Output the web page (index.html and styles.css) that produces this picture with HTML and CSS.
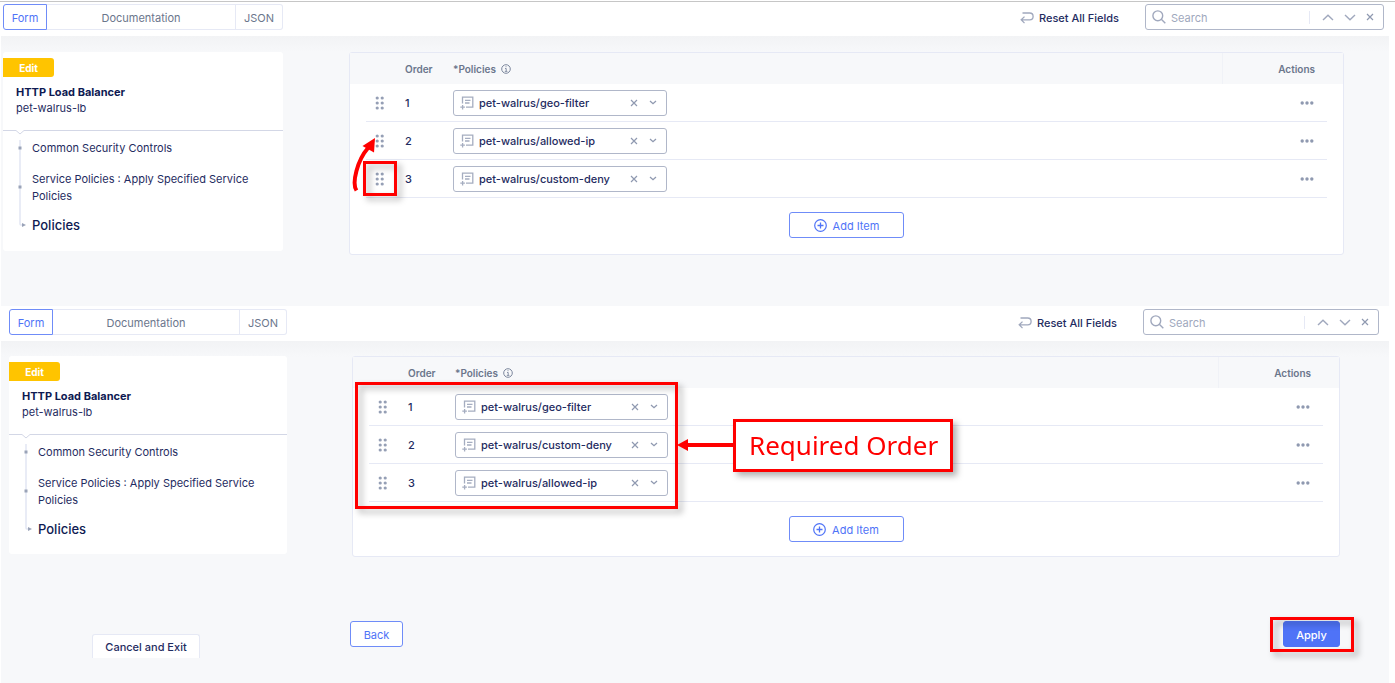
FILE: index.html
```html
<!DOCTYPE html>
<html lang="en">
<head>
<meta charset="utf-8">
<meta name="viewport" content="width=device-width, initial-scale=1">
<title>HTTP Load Balancer - Service Policies</title>
<link rel="stylesheet" href="styles.css">
</head>
<body>
<svg class="sprite" aria-hidden="true">
  <symbol id="i-grip" viewBox="0 0 10 14"><g fill="#959fb5"><circle cx="2.2" cy="2" r="1.6"/><circle cx="7.2" cy="2" r="1.6"/><circle cx="2.2" cy="7" r="1.6"/><circle cx="7.2" cy="7" r="1.6"/><circle cx="2.2" cy="12" r="1.6"/><circle cx="7.2" cy="12" r="1.6"/></g></symbol>
  <symbol id="i-note" viewBox="0 0 14 14"><path d="M2.500 7.500V1.200h10.300v10H6M5 4.300h5.500M5 7h4.500M.3 11.200h4.600M2.600 8.900v4.600" fill="none" stroke="#a5adc0" stroke-width="1.300"/></symbol>
  <symbol id="i-x" viewBox="0 0 8 8"><path d="M1 1l6 6M7 1L1 7" fill="none" stroke="#8f99b0" stroke-width="1.200"/></symbol>
  <symbol id="i-down" viewBox="0 0 8 5"><path d="M1 1l3 2.700L7 1" fill="none" stroke="#8f99b0" stroke-width="1.300"/></symbol>
  <symbol id="i-next" viewBox="0 0 12 7"><path d="M1 1l5 4.800L11 1" fill="none" stroke="#a0a8bd" stroke-width="1.400"/></symbol>
  <symbol id="i-prev" viewBox="0 0 12 7"><path d="M1 6l5-4.800L11 6" fill="none" stroke="#a0a8bd" stroke-width="1.400"/></symbol>
  <symbol id="i-search" viewBox="0 0 14 14"><circle cx="5.800" cy="5.800" r="4.900" fill="none" stroke="#a0a8bd" stroke-width="1.400"/><path d="M9.300 9.300l4 4" stroke="#a0a8bd" stroke-width="1.400"/></symbol>
  <symbol id="i-reset" viewBox="0 0 14 12"><path d="M2.500 1h7.200a3.400 3.400 0 0 1 0 6.800H1.500M4.500 4.600L1.200 7.800l3.300 3.300" fill="none" stroke="#a0a8bd" stroke-width="1.300"/></symbol>
  <symbol id="i-info" viewBox="0 0 10 10"><circle cx="5" cy="5" r="4.300" fill="none" stroke="#7c879d"/><path d="M4 4.500h1.200v2.800M3.800 7.400h2.600M4.500 2.700h1" fill="none" stroke="#7c879d" stroke-width=".9"/></symbol>
  <symbol id="i-plus" viewBox="0 0 13 13"><circle cx="6.500" cy="6.500" r="5.800" fill="none" stroke="#4f73f7" stroke-width="1.200"/><path d="M3.500 6.500h6M6.500 3.500v6" stroke="#4f73f7" stroke-width="1.300"/></symbol>
  <symbol id="i-dots" viewBox="0 0 14 4"><g fill="#8f99b0"><circle cx="2.200" cy="2" r="1.700"/><circle cx="7" cy="2" r="1.700"/><circle cx="11.800" cy="2" r="1.700"/></g></symbol>
  <symbol id="i-tree" viewBox="0 0 10 90"><path d="M4 0v84q0 1 1 1h2" fill="none" stroke="#e2e6f3" stroke-width="1.500"/><path d="M2.500 6.500h3v3h-3zM2.500 45.500h3v3h-3zM6 83l4 2-4 2z" fill="#9aa3b8"/></symbol>
</svg>

<section class="view">
  <header class="toolbar">
    <nav class="tabs" aria-label="View mode">
      <button class="tab tab-active">Form</button>
      <button class="tab">Documentation</button>
      <button class="tab">JSON</button>
    </nav>
    <button class="reset"><svg width="14" height="12"><use href="#i-reset"/></svg>Reset All Fields</button>
    <div class="search">
      <svg width="14" height="14"><use href="#i-search"/></svg>
      <input type="text" placeholder="Search" aria-label="Search fields">
      <div class="search-nav">
        <button aria-label="Previous match"><svg width="12" height="7"><use href="#i-prev"/></svg></button>
        <button aria-label="Next match"><svg width="12" height="7"><use href="#i-next"/></svg></button>
        <button aria-label="Clear search"><svg width="8" height="8"><use href="#i-x"/></svg></button>
      </div>
    </div>
  </header>
  <main class="content">
    <aside class="outline">
      <span class="badge">Edit</span>
      <div class="outline-head">
        <h2>HTTP Load Balancer</h2>
        <p>pet-walrus-lb</p>
        <svg class="notch" width="10" height="5" viewBox="0 0 10 5"><path d="M0 0h10L5 4z" fill="#fff"/><path d="M0 .5h1l4 3.500 4-3.500h1" fill="none" stroke="#d3d7e6"/></svg>
      </div>
      <nav class="tree" aria-label="Form sections">
        <svg width="10" height="90"><use href="#i-tree"/></svg>
        <div class="tree-links">
          <a href="#">Common Security Controls</a>
          <a href="#">Service Policies : Apply Specified Service Policies</a>
          <a class="current" href="#">Policies</a>
        </div>
      </nav>
    </aside>
    <section class="policies">
      <table>
        <thead><tr><th class="col-grip"></th><th class="col-order">Order</th><th><span class="label">*Policies <svg width="10" height="10"><use href="#i-info"/></svg></span></th><th class="col-actions">Actions</th></tr></thead>
        <tbody>
          <tr>
            <td><button class="grip" aria-label="Drag row 1"><svg width="10" height="14"><use href="#i-grip"/></svg></button></td><td>1</td>
            <td><div class="picker"><svg width="14" height="14"><use href="#i-note"/></svg><select aria-label="Policy 1"><option>pet-walrus/geo-filter</option></select><button aria-label="Clear policy 1"><svg width="8" height="8"><use href="#i-x"/></svg></button><svg width="8" height="5"><use href="#i-down"/></svg></div></td>
            <td class="col-actions"><button aria-label="Row 1 actions"><svg width="14" height="4"><use href="#i-dots"/></svg></button></td>
          </tr>
          <tr>
            <td><button class="grip" aria-label="Drag row 2"><svg width="10" height="14"><use href="#i-grip"/></svg></button></td><td>2</td>
            <td><div class="picker"><svg width="14" height="14"><use href="#i-note"/></svg><select aria-label="Policy 2"><option>pet-walrus/allowed-ip</option></select><button aria-label="Clear policy 2"><svg width="8" height="8"><use href="#i-x"/></svg></button><svg width="8" height="5"><use href="#i-down"/></svg></div></td>
            <td class="col-actions"><button aria-label="Row 2 actions"><svg width="14" height="4"><use href="#i-dots"/></svg></button></td>
          </tr>
          <tr>
            <td><button class="grip" aria-label="Drag row 3"><svg width="10" height="14"><use href="#i-grip"/></svg></button></td><td>3</td>
            <td><div class="picker"><svg width="14" height="14"><use href="#i-note"/></svg><select aria-label="Policy 3"><option>pet-walrus/custom-deny</option></select><button aria-label="Clear policy 3"><svg width="8" height="8"><use href="#i-x"/></svg></button><svg width="8" height="5"><use href="#i-down"/></svg></div></td>
            <td class="col-actions"><button aria-label="Row 3 actions"><svg width="14" height="4"><use href="#i-dots"/></svg></button></td>
          </tr>
        </tbody>
      </table>
      <button class="add"><svg width="13" height="13"><use href="#i-plus"/></svg>Add Item</button>
      <span class="mark mark-grip"></span>
      <svg class="mark-move" width="26" height="54" viewBox="0 0 26 54"><path d="M5.500 52.500C.5 45 6.500 22 17 10" fill="none" stroke="#f00" stroke-width="4"/><path d="M24 0l-1 14.500L11.500 8z" fill="#f00"/></svg>
    </section>
  </main>
</section>

<section class="view view-after">
  <header class="toolbar">
    <nav class="tabs" aria-label="View mode">
      <button class="tab tab-active">Form</button>
      <button class="tab">Documentation</button>
      <button class="tab">JSON</button>
    </nav>
    <button class="reset"><svg width="14" height="12"><use href="#i-reset"/></svg>Reset All Fields</button>
    <div class="search">
      <svg width="14" height="14"><use href="#i-search"/></svg>
      <input type="text" placeholder="Search" aria-label="Search fields">
      <div class="search-nav">
        <button aria-label="Previous match"><svg width="12" height="7"><use href="#i-prev"/></svg></button>
        <button aria-label="Next match"><svg width="12" height="7"><use href="#i-next"/></svg></button>
        <button aria-label="Clear search"><svg width="8" height="8"><use href="#i-x"/></svg></button>
      </div>
    </div>
  </header>
  <main class="content">
    <aside class="outline">
      <span class="badge">Edit</span>
      <div class="outline-head">
        <h2>HTTP Load Balancer</h2>
        <p>pet-walrus-lb</p>
        <svg class="notch" width="10" height="5" viewBox="0 0 10 5"><path d="M0 0h10L5 4z" fill="#fff"/><path d="M0 .5h1l4 3.500 4-3.500h1" fill="none" stroke="#d3d7e6"/></svg>
      </div>
      <nav class="tree" aria-label="Form sections">
        <svg width="10" height="90"><use href="#i-tree"/></svg>
        <div class="tree-links">
          <a href="#">Common Security Controls</a>
          <a href="#">Service Policies : Apply Specified Service Policies</a>
          <a class="current" href="#">Policies</a>
        </div>
      </nav>
    </aside>
    <section class="policies">
      <table>
        <thead><tr><th class="col-grip"></th><th class="col-order">Order</th><th><span class="label">*Policies <svg width="10" height="10"><use href="#i-info"/></svg></span></th><th class="col-actions">Actions</th></tr></thead>
        <tbody>
          <tr>
            <td><button class="grip" aria-label="Drag row 1"><svg width="10" height="14"><use href="#i-grip"/></svg></button></td><td>1</td>
            <td><div class="picker"><svg width="14" height="14"><use href="#i-note"/></svg><select aria-label="Policy 1"><option>pet-walrus/geo-filter</option></select><button aria-label="Clear policy 1"><svg width="8" height="8"><use href="#i-x"/></svg></button><svg width="8" height="5"><use href="#i-down"/></svg></div></td>
            <td class="col-actions"><button aria-label="Row 1 actions"><svg width="14" height="4"><use href="#i-dots"/></svg></button></td>
          </tr>
          <tr>
            <td><button class="grip" aria-label="Drag row 2"><svg width="10" height="14"><use href="#i-grip"/></svg></button></td><td>2</td>
            <td><div class="picker"><svg width="14" height="14"><use href="#i-note"/></svg><select aria-label="Policy 2"><option>pet-walrus/custom-deny</option></select><button aria-label="Clear policy 2"><svg width="8" height="8"><use href="#i-x"/></svg></button><svg width="8" height="5"><use href="#i-down"/></svg></div></td>
            <td class="col-actions"><button aria-label="Row 2 actions"><svg width="14" height="4"><use href="#i-dots"/></svg></button></td>
          </tr>
          <tr>
            <td><button class="grip" aria-label="Drag row 3"><svg width="10" height="14"><use href="#i-grip"/></svg></button></td><td>3</td>
            <td><div class="picker"><svg width="14" height="14"><use href="#i-note"/></svg><select aria-label="Policy 3"><option>pet-walrus/allowed-ip</option></select><button aria-label="Clear policy 3"><svg width="8" height="8"><use href="#i-x"/></svg></button><svg width="8" height="5"><use href="#i-down"/></svg></div></td>
            <td class="col-actions"><button aria-label="Row 3 actions"><svg width="14" height="4"><use href="#i-dots"/></svg></button></td>
          </tr>
        </tbody>
      </table>
      <button class="add"><svg width="13" height="13"><use href="#i-plus"/></svg>Add Item</button>
      <span class="mark mark-rows"></span>
      <svg class="mark-arrow" width="57" height="12" viewBox="0 0 57 12"><path d="M0 6L11 0v12z" fill="#f00"/><path d="M9 6h48" stroke="#f00" stroke-width="4"/></svg>
      <span class="mark callout">Required Order</span>
    </section>
  </main>
  <footer class="footer">
    <div class="footer-exit"><button class="cancel">Cancel and Exit</button></div>
    <button class="back">Back</button>
    <div class="apply-wrap"><button class="apply">Apply</button><span class="mark mark-apply"></span></div>
  </footer>
</section>
</body>
</html>
```

FILE: styles.css
```css
* { box-sizing: border-box; }

body {
  --navy: #1f2c61;
  --muted: #6b768c;
  --blue: #4f73f7;
  --line: #e6e9f5;
  --page: #f7f8fa;
  display: flex;
  flex-direction: column;
  min-height: 100vh;
  margin: 0;
  padding: 1px 6px 0 1px;
  background: #fff;
  color: var(--navy);
  font: 11px/16px Inter, "Liberation Sans", sans-serif;
}

body::before {
  content: "";
  height: 1px;
  margin: 0 -6px 0 -1px;
  background: #c6c6c6;
}

button, input, select {
  margin: 0;
  padding: 0;
  border: 0;
  background: none;
  color: inherit;
  font: inherit;
}

svg { display: block; flex: none; }
.sprite { position: absolute; width: 0; height: 0; }

.toolbar {
  display: flex;
  align-items: flex-start;
  height: 34px;
  padding: 2px 5px 0 2px;
  background: #fff;
}

.tabs {
  display: grid;
  grid-template-columns: 44px 1fr 47px;
  width: 280px;
  height: 26px;
  border-radius: 3px;
}

.tab {
  padding-top: 1px;
  border: 1px solid var(--line);
  border-left: 0;
  color: var(--muted);
}
.tab:last-child { border-radius: 0 3px 3px 0; }
.tab-active {
  border: 1px solid #6f8cf8;
  border-radius: 3px 0 0 3px;
  color: var(--blue);
}

.reset {
  display: flex;
  align-items: center;
  gap: 5px;
  height: 26px;
  margin: 0 26px 0 auto;
  padding-top: 1px;
  font-weight: 500;
}

.search {
  display: flex;
  align-items: center;
  width: 239px;
  height: 26px;
  padding: 0 9px 0 6px;
  border: 1px solid #b0b7c9;
  border-radius: 3px;
}
.search input {
  flex: 1;
  min-width: 0;
  margin-left: 5px;
  padding-top: 1px;
  outline: 0;
}
.search input::placeholder { color: #a0a8bd; opacity: 1; }
.search-nav {
  display: flex;
  align-items: center;
  gap: 10px;
  height: 13px;
  padding-left: 12px;
  border-left: 1px solid var(--line);
}

.content {
  display: flex;
  align-items: flex-start;
  gap: 66px;
  padding: 16px 45px 51px 2px;
  background: linear-gradient(#f2f3f5, var(--page) 16px);
}

.outline {
  flex: none;
  width: 280px;
  min-height: 199px;
  padding: 6px 0 14px;
  border-radius: 3px;
  background: #fff;
}

.badge {
  display: block;
  width: 51px;
  height: 19px;
  border-radius: 0 3px 3px 0;
  background: #ffc400;
  color: #fff;
  font-size: 10px;
  line-height: 20px;
  font-weight: 700;
  text-align: center;
}

.outline-head {
  position: relative;
  padding: 7px 13px 14px;
  border-bottom: 1px solid #d3d7e6;
}
.outline-head h2, .outline-head p { margin: 0; font-size: 11px; line-height: 16px; }
.outline-head h2 { color: #0e1a52; font-weight: 700; }
.notch { position: absolute; left: 12px; bottom: -5px; }

.tree {
  display: flex;
  gap: 6px;
  padding: 9px 20px 0 13px;
}
.tree-links { display: flex; flex-direction: column; gap: 14px; line-height: 17px; }
.tree a { color: inherit; text-decoration: none; }
.tree .current { color: #0e1a52; font-size: 13px; font-weight: 500; margin-top: -2px; }

.policies {
  position: relative;
  flex: 1;
  padding: 0 16px 16px;
  border: 1px solid var(--line);
  border-radius: 3px;
  background: #fff;
}

table {
  width: 100%;
  border-spacing: 0;
  table-layout: fixed;
}
th, td { padding: 0; text-align: left; vertical-align: middle; }
th {
  height: 31px;
  background: var(--page);
  color: var(--muted);
  font-size: 10px;
  font-weight: 600;
}
th:first-child { box-shadow: -16px 0 0 var(--page); }
th:last-child { box-shadow: 16px 0 0 var(--page); border-left: 1px solid #f0f2f7; }
td { height: 38px; border-bottom: 1px solid var(--line); font-weight: 500; }
.col-grip { width: 39px; }
.col-order { width: 48px; }
.col-actions { width: 105px; padding-right: 12px; text-align: right; }
.col-actions button { display: inline-block; padding: 3px 1px 5px; vertical-align: middle; }
.label { display: flex; align-items: center; gap: 5px; }
.grip { display: block; padding: 2px 9px; }

.picker {
  display: flex;
  align-items: center;
  width: 214px;
  height: 26px;
  padding: 0 9px 0 6px;
  border: 1px solid #b0b7c9;
  border-radius: 3px;
  background: #fff;
}
.picker select {
  flex: 1;
  min-width: 0;
  margin-left: 5px;
  appearance: none;
  outline: 0;
}
.picker button { margin-right: 11px; }

.add, .back, .apply {
  display: flex;
  align-items: center;
  justify-content: center;
  height: 26px;
  padding-top: 1px;
  border: 1px solid #6f8cf8;
  border-radius: 3px;
  background: #fff;
  color: var(--blue);
}
.add { gap: 6px; width: 115px; margin: 14px auto 0; }

.mark {
  position: absolute;
  border: 3px solid #f00;
  filter: drop-shadow(4px 4px 3px rgba(0, 0, 0, .3));
  pointer-events: none;
}
.mark-grip { left: 13px; top: 108px; width: 34px; height: 35px; }
.mark-move { position: absolute; left: 1px; top: 85px; }
.mark-rows { left: 2px; top: 25px; width: 323px; height: 127px; }
.mark-arrow { position: absolute; left: 324px; top: 82px; }
.callout {
  left: 380px;
  top: 62px;
  padding: 4px 12px 5px 13px;
  background: #fff;
  color: #f00;
  font: 26px/38px "Noto Sans", sans-serif;
  white-space: nowrap;
}

.view-after { flex: 1; background: var(--page); }
.view-after .toolbar { height: 35px; padding: 3px 10px 0 8px; }
.view-after .tabs { width: 278px; }
.view-after .search { width: 236px; }
.view-after .content { gap: 65px; padding: 15px 49px 0 8px; }
.view-after .outline { width: 278px; min-height: 198px; }
.view-after .policies { padding-bottom: 14px; }
.view-after .col-order { width: 47px; }
.view-after .picker { width: 213px; }

.footer {
  display: flex;
  align-items: flex-start;
  padding: 64px 49px 26px 8px;
}
.footer-exit { width: 341px; padding: 13px 0 0 83px; }
.cancel {
  width: 108px;
  height: 24px;
  padding-top: 1px;
  border: 1px solid var(--line);
  border-bottom: 0;
  border-radius: 3px 3px 0 0;
  background: #fff;
  font-weight: 500;
}
.back { width: 53px; }
.apply-wrap { position: relative; margin-left: auto; }
.apply { width: 57px; border-color: var(--blue); background: var(--blue); color: #fff; font-weight: 500; }
.mark-apply { inset: -4px -14px -5px -13px; }
```
